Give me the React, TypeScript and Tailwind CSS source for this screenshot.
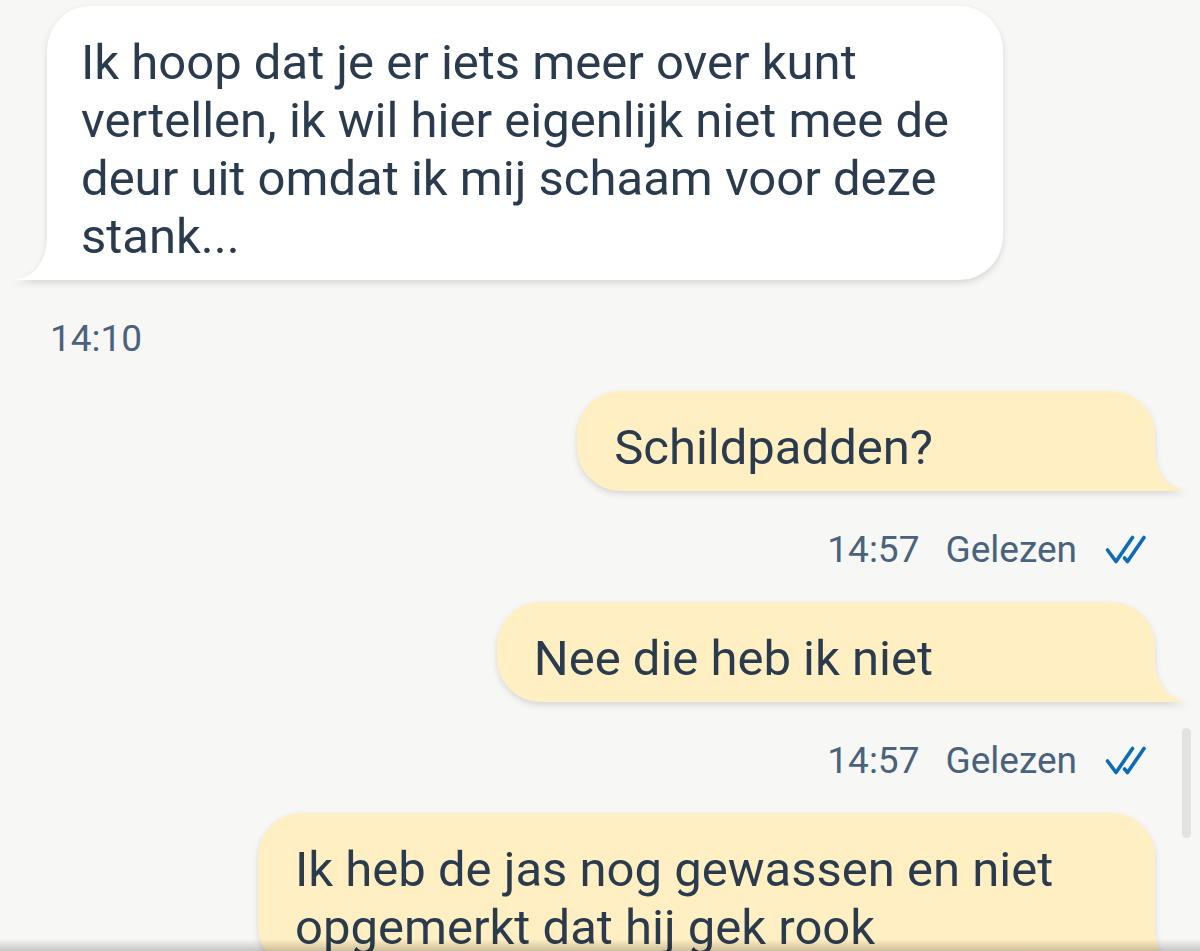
import type { ReactNode } from "react";

type Side = "in" | "out";

function Tail({ side }: { side: Side }) {
  return (
    <svg
      aria-hidden="true"
      viewBox="0 0 36 44"
      className={
        side === "in"
          ? "absolute bottom-0 right-full h-11 w-9 -scale-x-100 fill-white"
          : "absolute bottom-0 left-full h-11 w-9 fill-[#ffefc3]"
      }
    >
      <path d="M-1 0H0C0 27 14 43 36 44H-1Z" />
    </svg>
  );
}

function Bubble({ side, className, children }: { side: Side; className: string; children: ReactNode }) {
  const look =
    side === "in"
      ? "self-start rounded-bl-none bg-white pl-[34px]"
      : "self-end rounded-br-none bg-[#ffefc3] pl-[37px]";
  return (
    <div
      className={`relative rounded-[44px] pt-[28px] pb-[14px] text-[49px] leading-[58px] text-[#2b3b4e] drop-shadow-[0_3px_3px_rgba(0,0,0,0.13)] ${look} ${className}`}
    >
      <p>{children}</p>
      <Tail side={side} />
    </div>
  );
}

function ReadTicks() {
  return (
    <svg
      aria-hidden="true"
      viewBox="0 0 44 32"
      className="h-8 w-11 fill-none stroke-[#0e6bb8] stroke-[3.6]"
      strokeLinecap="round"
      strokeLinejoin="round"
    >
      <path d="M4.5 16L13 27.5L29.5 3.5" />
      <path d="M21.5 24L24.5 27.5L41 3.5" />
    </svg>
  );
}

function Meta({ time, read = false }: { time: string; read?: boolean }) {
  return (
    <div
      className={`mt-[37px] mb-[30px] flex items-center text-[37px] leading-[44px] text-[#4a627c] ${
        read ? "gap-[26px] self-end pr-2" : "self-start pl-[3px]"
      }`}
    >
      <time>{time}</time>
      {read && <span>Gelezen</span>}
      {read && <ReadTicks />}
    </div>
  );
}

export default function App() {
  return (
    <main className="relative h-screen overflow-hidden bg-[#f7f7f5] font-['Roboto',sans-serif]">
      <div className="flex flex-col pt-[6px] pr-[45px] pl-[47px]">
        <Bubble side="in" className="max-w-[956px] pr-[50px]">
          Ik hoop dat je er iets meer over kunt vertellen, ik wil hier eigenlijk niet mee de deur uit omdat ik mij
          schaam voor deze stank...
        </Bubble>
        <Meta time="14:10" />
        <Bubble side="out" className="pr-[222px]">
          Schildpadden?
        </Bubble>
        <Meta time="14:57" read />
        <Bubble side="out" className="pr-[222px]">
          Nee die heb ik niet
        </Bubble>
        <Meta time="14:57" read />
        <Bubble side="out" className="max-w-[897px] pr-[90px]">
          Ik heb de jas nog gewassen en niet opgemerkt dat hij gek rook
        </Bubble>
      </div>
      <div className="absolute right-[9px] bottom-[113px] h-[110px] w-[9px] rounded-full bg-[#e2e2e0]" />
      <div className="absolute inset-x-0 bottom-0 h-3 bg-linear-to-t from-black/20 to-transparent" />
    </main>
  );
}
